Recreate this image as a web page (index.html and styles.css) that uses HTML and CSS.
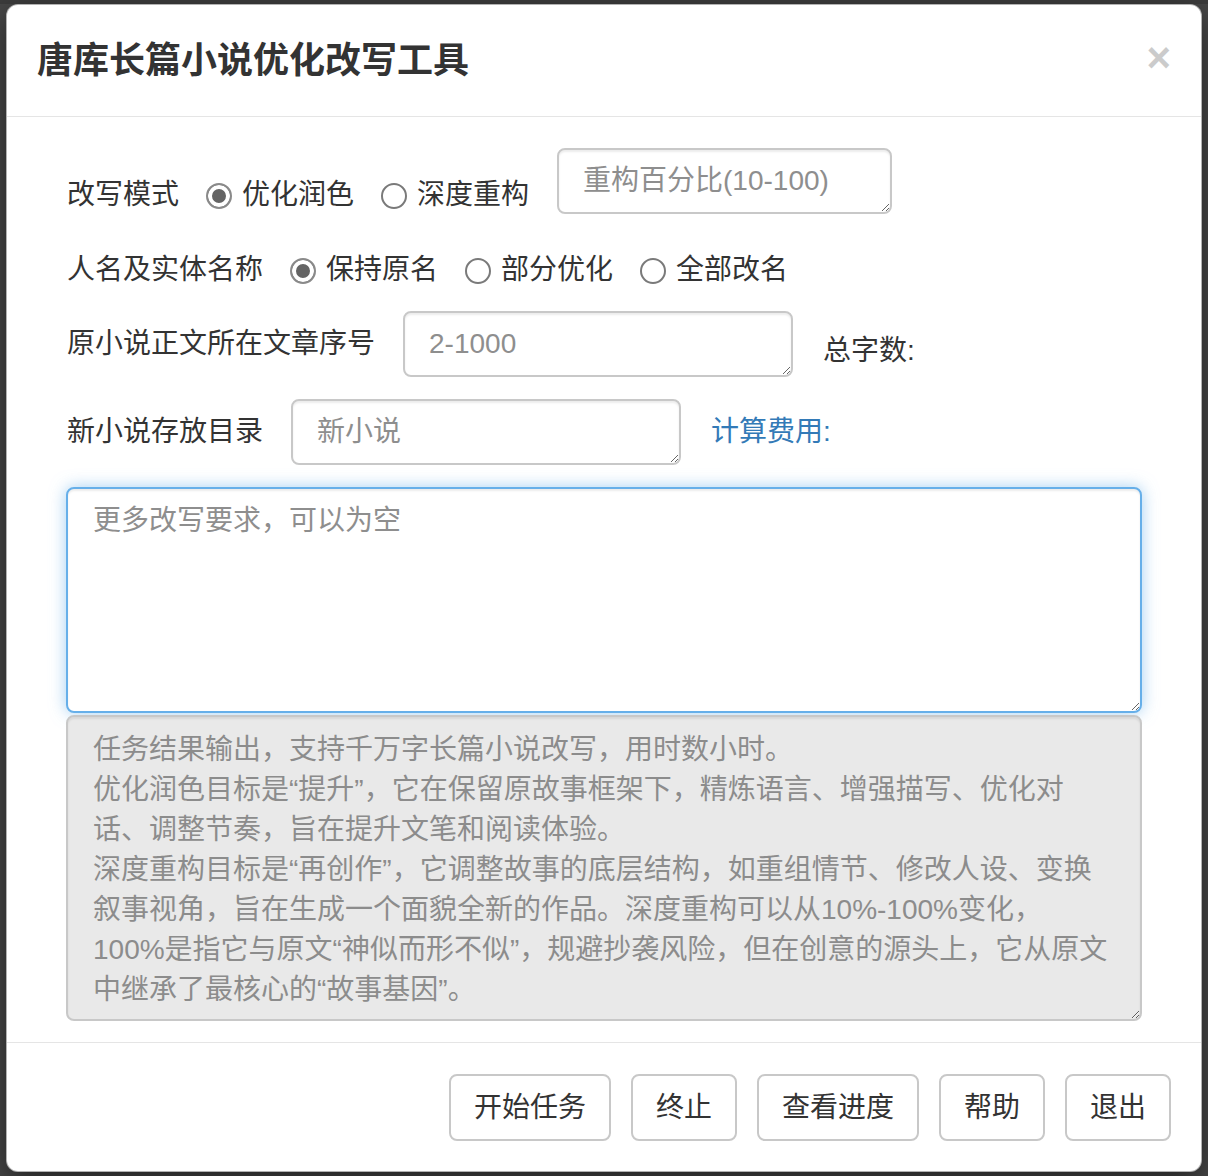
FILE: index.html
```html
<!DOCTYPE html>
<html lang="zh-CN">
<head>
<meta charset="utf-8">
<title>唐库长篇小说优化改写工具</title>
<link rel="stylesheet" href="styles.css">
</head>
<body>
<div class="modal">
  <div class="modal-header">
    <h4 class="modal-title">唐库长篇小说优化改写工具</h4>
    <button class="close" type="button">×</button>
  </div>
  <div class="modal-body">
    <div class="form">
      <div class="row row-mode">
        <span class="lbl">改写模式</span>
        <label class="opt"><input type="radio" name="mode" checked><span>优化润色</span></label>
        <label class="opt"><input type="radio" name="mode"><span>深度重构</span></label>
        <textarea class="field field-percent" placeholder="重构百分比(10-100)"></textarea>
      </div>
      <div class="row row-names">
        <span class="lbl">人名及实体名称</span>
        <label class="opt"><input type="radio" name="names" checked><span>保持原名</span></label>
        <label class="opt"><input type="radio" name="names"><span>部分优化</span></label>
        <label class="opt"><input type="radio" name="names"><span>全部改名</span></label>
      </div>
      <div class="row row-chapter">
        <span class="lbl lbl-field">原小说正文所在文章序号</span>
        <textarea class="field field-wide" placeholder="2-1000"></textarea>
        <span class="info info-count">总字数:</span>
      </div>
      <div class="row row-dir">
        <span class="lbl lbl-field">新小说存放目录</span>
        <textarea class="field field-wide" placeholder="新小说"></textarea>
        <a class="info info-cost">计算费用:</a>
      </div>
      <textarea class="field big focused" placeholder="更多改写要求，可以为空"></textarea>
      <div class="notice">
        <span class="line">任务结果输出，支持千万字长篇小说改写，用时数小时。</span>
        <span class="line">优化润色目标是“提升”，它在保留原故事框架下，精炼语言、增强描写、优化对</span>
        <span class="line">话、调整节奏，旨在提升文笔和阅读体验。</span>
        <span class="line">深度重构目标是“再创作”，它调整故事的底层结构，如重组情节、修改人设、变换</span>
        <span class="line">叙事视角，旨在生成一个面貌全新的作品。深度重构可以从10%-100%变化，</span>
        <span class="line">100%是指它与原文“神似而形不似”，规避抄袭风险，但在创意的源头上，它从原文</span>
        <span class="line">中继承了最核心的“故事基因”。</span>
      </div>
    </div>
  </div>
  <div class="modal-footer">
    <button class="btn" type="button">开始任务</button>
    <button class="btn" type="button">终止</button>
    <button class="btn" type="button">查看进度</button>
    <button class="btn" type="button">帮助</button>
    <button class="btn" type="button">退出</button>
  </div>
</div>
</body>
</html>
```

FILE: styles.css
```css
html {
  background: #474747;
}

body {
  margin: 0;
  padding: 4px 6px;
  font-family: "Liberation Sans", "Noto Sans CJK SC", sans-serif;
  font-size: 28px;
  line-height: 40px;
  color: #333;
  background:
    linear-gradient(#3c3c3c, #3c3c3c) 0 0 / 100% 4px no-repeat,
    #474747;
}

.modal {
  background: #fff;
  border: 1px solid rgba(0, 0, 0, 0.3);
  border-radius: 12px;
  box-shadow: 0 10px 30px rgba(0, 0, 0, 0.5);
  height: 1166px;
  display: flex;
  flex-direction: column;
  overflow: hidden;
}

.modal-header {
  display: flex;
  align-items: center;
  justify-content: space-between;
  padding: 30px;
  border-bottom: 1px solid #e5e5e5;
}

.modal-title {
  margin: 0;
  font-size: 36px;
  line-height: 51px;
  font-weight: 700;
  color: #333;
}

.close {
  appearance: none;
  background: none;
  border: 0;
  padding: 0;
  margin-top: -6px;
  font-family: "Liberation Sans", sans-serif;
  font-size: 42px;
  font-weight: 700;
  line-height: 1;
  color: #000;
  opacity: 0.2;
}

.modal-body {
  padding: 31px 30px 21px;
  flex: 1;
}

.form {
  padding: 0 29px;
  display: flex;
  flex-direction: column;
}

.row {
  display: flex;
  align-items: flex-start;
}

.row-names {
  margin-top: 35px;
}

.row-chapter {
  margin-top: 21px;
}

.row-dir {
  margin-top: 22px;
}

.lbl {
  margin-left: 1px;
  white-space: nowrap;
}

.row-mode .lbl,
.row-mode .opt {
  margin-top: 27px;
}

.lbl-field {
  margin-top: 13px;
}

.opt {
  display: flex;
  align-items: center;
  gap: 10px;
  margin-left: 27px;
  white-space: nowrap;
}

.opt input {
  appearance: none;
  margin: 2px 0 0;
  width: 26px;
  height: 26px;
  border: 2px solid #7a7a7a;
  border-radius: 50%;
  background: #fff;
  box-sizing: border-box;
}

.opt input:checked {
  background: #646464;
  box-shadow: inset 0 0 0 4px #fff;
  border-color: #8a8a8a;
}

.field {
  box-sizing: border-box;
  font-family: "Liberation Sans", "Noto Sans CJK SC", sans-serif;
  font-size: 28px;
  line-height: 40px;
  color: #555;
  background: #fff;
  border: 2px solid #c8c8c8;
  border-radius: 8px;
  box-shadow: inset 0 2px 2px rgba(0, 0, 0, 0.075);
  padding: 11px 24px;
  margin: 0;
  outline: none;
}

.field::placeholder {
  color: #8e8e8e;
}

.field-percent {
  margin-left: 28px;
  width: 335px;
  height: 66px;
}

.field-wide {
  margin-left: 28px;
  width: 390px;
  height: 66px;
}

.info {
  margin-left: 30px;
  white-space: nowrap;
}

.info-count {
  margin-top: 20px;
}

.info-cost {
  margin-top: 13px;
  color: #337ab7;
  text-decoration: none;
}

.big {
  margin-top: 22px;
  width: 100%;
  height: 226px;
  padding: 12px 25px;
}

.focused {
  border-color: #66afe9;
  box-shadow: inset 0 2px 2px rgba(0, 0, 0, 0.075), 0 0 16px rgba(102, 175, 233, 0.6);
}

.notice {
  margin-top: 2px;
  box-sizing: border-box;
  height: 306px;
  padding: 13px 25px;
  background: #e9e9e9;
  border: 2px solid #c8c8c8;
  border-radius: 8px;
  box-shadow: inset 0 2px 2px rgba(0, 0, 0, 0.075);
  color: #8c8c8c;
  resize: both;
  overflow: hidden;
}

.line {
  display: block;
  white-space: nowrap;
}

.modal-footer {
  display: flex;
  justify-content: flex-end;
  gap: 20px;
  padding: 31px 30px;
  border-top: 1px solid #e5e5e5;
}

.btn {
  appearance: none;
  box-sizing: border-box;
  height: 67px;
  padding: 12px 23px;
  font-family: "Liberation Sans", "Noto Sans CJK SC", sans-serif;
  font-size: 28px;
  line-height: 40px;
  color: #333;
  background: #fff;
  border: 2px solid #c8c8c8;
  border-radius: 8px;
}
```
